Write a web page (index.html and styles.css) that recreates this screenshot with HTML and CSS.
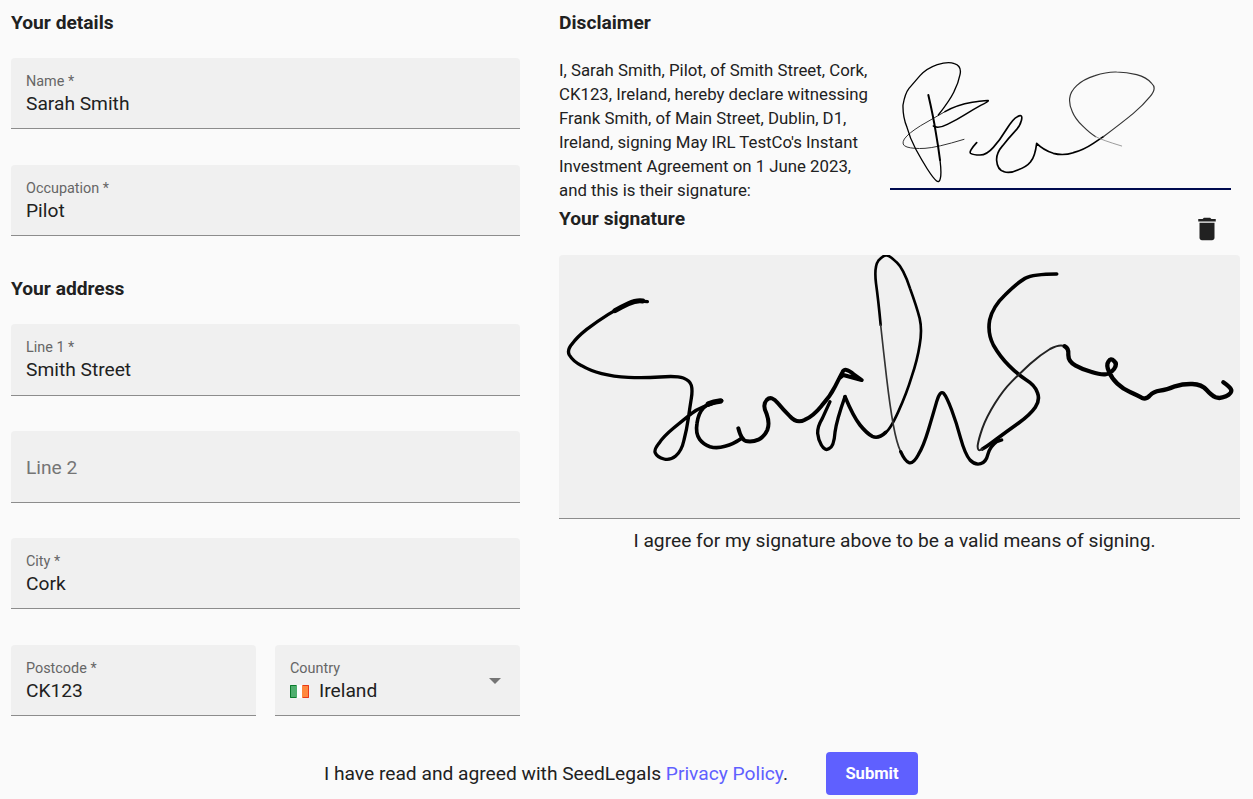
FILE: index.html
```html
<!DOCTYPE html>
<html lang="en">
<head>
    <meta charset="UTF-8">
    <meta name="viewport" content="width=device-width, initial-scale=1.0">
    <title>Witness signature</title>
    <link rel="stylesheet" href="styles.css">
</head>
<body>

<div class="columns">
    <!-- Left: witness details -->
    <section class="details">
        <h2 class="heading">Your details</h2>
        <div class="field"><span class="field-label">Name *</span><span class="field-value">Sarah Smith</span></div>
        <div class="field"><span class="field-label">Occupation *</span><span class="field-value">Pilot</span></div>

        <h2 class="heading heading-spaced">Your address</h2>
        <div class="field field-tall"><span class="field-label">Line 1 *</span><span class="field-value">Smith Street</span></div>
        <div class="field field-tall field-empty"><span class="field-placeholder">Line 2</span></div>
        <div class="field"><span class="field-label">City *</span><span class="field-value">Cork</span></div>
        <div class="field-row">
            <div class="field"><span class="field-label">Postcode *</span><span class="field-value">CK123</span></div>
            <div class="field field-select">
                <span class="field-label">Country</span>
                <span class="field-value">
                    <svg class="flag" viewBox="0 0 19 13" aria-hidden="true">
                        <rect width="19" height="13" fill="#fff"/>
                        <rect width="7" height="13" fill="#4fae6e"/>
                        <rect x="12" width="7" height="13" fill="#ff883e"/>
                        <path d="M6 0.500H0.500V12.500H6" fill="none" stroke="#0b7a2c"/>
                        <path d="M13 0.500H18.500V12.500H13" fill="none" stroke="#e8381c"/>
                    </svg>
                    Ireland
                </span>
                <span class="caret"></span>
            </div>
        </div>
    </section>

    <!-- Right: disclaimer and signature -->
    <section class="disclaimer">
        <h2 class="heading">Disclaimer</h2>
        <div class="statement">
            <p class="statement-text">I, Sarah Smith, Pilot, of Smith Street, Cork, CK123, Ireland, hereby declare witnessing Frank Smith, of Main Street, Dublin, D1, Ireland, signing May IRL TestCo's Instant Investment Agreement on 1 June 2023, and this is their signature:</p>
            <div class="signer-sign">
                <svg class="signer-svg" viewBox="30 24 1023 390" aria-hidden="true" fill="none" stroke="#000" stroke-linecap="round" stroke-linejoin="round">
                    <path stroke-width="3" stroke="#333" d="M252 268 Q170 293 135 295 Q100 297 81 291 Q62 285 73 267 Q85 250 122 227 Q160 205 195 185"/>
                    <path stroke-width="4.500" d="M195 185 Q230 165 277 157 Q325 150 325 152 Q325 155 302 166 Q280 178 255 194 Q230 210 202 223 Q175 237 160 228"/>
                    <path stroke-width="6" d="M145 135 Q160 200 167 245 Q175 290 180 330"/>
                    <path stroke-width="4" d="M180 330 Q185 370 181 385 Q178 400 169 392 Q160 385 142 357 Q125 330 107 297 Q90 265 81 232 Q68 200 69 165 Q75 130 87 115 Q100 100 120 77 Q140 55 172 44 Q205 34 223 41 Q246 48 240 74 Q235 100 222 125 Q210 150 175 195"/>
                    <path stroke-width="5" d="M290 278 Q265 305 272 310 Q280 315 300 315 Q320 315 340 292 Q360 270 380 237 Q400 205 412 200 Q430 190 424 212 Q420 230 402 247 Q385 265 368 287 Q348 310 350 332 Q352 360 372 365 Q390 371 415 359 Q440 350 452 335 Q465 320 470 280 Q490 300 520 310 Q550 318 580 308 Q610 300 640 280 L670 260"/>
                    <path stroke-width="3.500" stroke="#333" d="M670 260 Q730 215 760 190 Q790 165 810 140 Q832 115 815 100 Q800 82 770 74 Q740 66 710 66 Q680 65 645 77 Q610 88 590 107 Q571 125 569 145 Q567 165 577 185 Q585 205 607 227 Q630 250 647 260"/>
                    <path stroke-width="2.500" stroke="#888" d="M647 260 Q665 270 725 288"/>
                </svg>
            </div>
        </div>
        <div class="sign-header">
            <h2 class="heading heading-plain">Your signature</h2>
            <svg class="trash" viewBox="0 0 24 24" aria-hidden="true"><path d="M6 19c0 1.100.9 2 2 2h8c1.100 0 2-.9 2-2V7H6v12zM19 4h-3.500l-1-1h-5l-1 1H5v2h14V4z"/></svg>
        </div>
        <div class="sign-box">
            <svg class="sign-svg" viewBox="27 15 2043 789" aria-hidden="true" fill="none" stroke="#000" stroke-linecap="round" stroke-linejoin="round">
                <path stroke-width="10" d="M292 155 Q260 150 235 161 Q210 172 175 193 Q140 215 110 238 Q80 262 67 281 Q50 300 58 315 Q70 335 95 347 Q120 362 155 371 Q190 380 235 382 Q280 384 330 381 Q380 377 400 384 Q420 392 424 406 Q428 420 424 445 Q420 470 415 505 Q410 540 402 570 Q395 603 377 618 Q360 632 342 627 Q322 622 316 609 Q311 600 327 580 Q340 560 370 535 Q400 510 425 490 Q450 470 515 452"/>
                <path stroke-width="15" d="M278 153 Q260 150 235 161 Q215 170 195 182"/>
                <path stroke-width="16" d="M511 453 Q490 455 475 462"/>
                <path stroke-width="11" d="M515 452 Q475 458 460 474 Q445 490 441 520 Q436 550 449 568 Q460 583 480 590 Q500 596 525 589 Q550 583 575 565"/>
                <path stroke-width="12" d="M565 535 Q575 574 592 574 Q610 576 625 569 Q643 560 652 540 Q660 520 650 492 Q636 465 650 450 Q665 435 684 460 Q700 480 720 499 Q740 522 765 509 Q790 498 815 467 Q840 440 855 410 Q870 380 877 367 Q885 350 910 372 L935 390 L880 375 L868 385"/>
                <path stroke-width="10" d="M885 440 Q860 510 855 547 Q852 590 837 596 Q825 604 814 585 Q805 570 803 550 Q802 530 817 505 L840 455"/>
                <path stroke-width="11" d="M885 440 Q910 500 930 525 Q950 550 967 559 Q985 568 1007 547"/>
                <path stroke-width="8" d="M1007 547 Q1020 540 1045 485 Q1070 430 1085 380 Q1102 330 1109 285 Q1117 240 1109 205 Q1100 170 1080 115 Q1060 55 1040 37 Q1020 17 1010 16 Q1000 15 985 32 Q972 50 978 100 Q985 150 992 225"/>
                <path stroke-width="5" stroke="#333" d="M992 225 Q1000 300 1010 385 Q1020 470 1030 525 Q1040 580 1052 605"/>
                <path stroke-width="10" d="M1052 605 Q1065 634 1077 638 Q1090 642 1105 614 Q1120 590 1135 540 Q1150 490 1160 455 Q1170 420 1181 430 Q1190 440 1205 480 Q1220 520 1232 565 Q1245 612 1260 630 Q1275 646 1292 641 Q1308 637 1314 612 Q1320 590 1340 575 L1355 570"/>
                <path stroke-width="11" d="M1520 72 Q1450 72 1425 85 Q1400 100 1365 135 Q1328 170 1319 210 Q1312 250 1330 285 Q1350 320 1377 347 Q1405 375 1429 390 Q1454 405 1462 427 Q1471 450 1456 472 Q1440 495 1405 520 Q1370 545 1340 567 Q1310 590 1297 597"/>
                <path stroke-width="6" stroke="#222" d="M1297 597 Q1282 608 1283 587 Q1285 570 1297 535 Q1310 500 1335 460 Q1360 420 1385 395 Q1410 370 1440 342 Q1470 315 1500 297 Q1530 281 1544 289"/>
                <path stroke-width="13" d="M1544 289 Q1557 295 1555 315 Q1555 335 1577 347 Q1600 360 1625 366 Q1650 374 1665 373 Q1680 372 1692 357 Q1703 342 1692 333 Q1682 322 1675 335 Q1668 345 1677 365 Q1685 385 1702 401 Q1720 418 1740 426 Q1760 435 1775 443 Q1790 450 1800 436 Q1810 425 1830 422 Q1850 420 1875 409 Q1900 401 1927 402 Q1955 403 1970 420 Q1985 437 1997 442 Q2010 447 2028 439 Q2045 431 2044 421 Q2042 412 2020 397"/>
            </svg>
        </div>
        <p class="sign-caption">I agree for my signature above to be a valid means of signing.</p>
    </section>
</div>

<div class="submit-row">
    <span class="submit-text">I have read and agreed with SeedLegals <a class="submit-link" href="#">Privacy Policy</a>.</span>
    <button class="submit-btn" type="button">Submit</button>
</div>

</body>
</html>
```

FILE: styles.css
```css
* {
    margin: 0;
    padding: 0;
    box-sizing: border-box;
}

body {
    font-family: Roboto, "Liberation Sans", sans-serif;
    background: #fafafa;
    color: #212121;
    height: 799px;
    overflow: hidden;
}

.columns {
    display: flex;
    gap: 39px;
    padding: 0 13px 0 11px;
}

.details {
    width: 509px;
    flex-shrink: 0;
}

.disclaimer {
    width: 681px;
}

.heading {
    font-size: 19.2px;
    font-weight: 700;
    line-height: 24px;
    padding-top: 11px;
    margin-bottom: 23px;
}

.heading-spaced {
    padding-top: 5px;
}

.heading-plain {
    padding-top: 0;
    margin-bottom: 0;
}

/* Form fields */
.field {
    position: relative;
    display: flex;
    flex-direction: column;
    height: 71px;
    margin-bottom: 36px;
    padding: 15px 15px 0;
    background: #f0f0f0;
    border-bottom: 1px solid #8c8c8c;
    border-radius: 4px 4px 0 0;
}

.field-tall {
    height: 72px;
    margin-bottom: 35px;
}

.field-label {
    font-size: 14.4px;
    line-height: 18px;
    color: #666;
}

.field-value {
    display: flex;
    align-items: center;
    font-size: 19.2px;
    line-height: 26px;
    color: #212121;
}

.field-empty {
    justify-content: center;
    padding-top: 2px;
}

.field-placeholder {
    font-size: 19.2px;
    color: #757575;
}

.field-row {
    display: grid;
    grid-template-columns: 245px 245px;
    gap: 19px;
}

.field-row .field {
    margin-bottom: 0;
}

.flag {
    width: 19px;
    height: 13px;
    margin-right: 10px;
}

.caret {
    position: absolute;
    top: 33px;
    right: 19px;
    border-left: 6px solid transparent;
    border-right: 6px solid transparent;
    border-top: 6px solid #757575;
}

/* Disclaimer */
.statement {
    display: flex;
    gap: 16px;
    height: 149px;
}

.statement-text {
    width: 315px;
    font-size: 16.8px;
    line-height: 24px;
}

.signer-sign {
    width: 341px;
    height: 132px;
    border-bottom: 2px solid #000a4f;
}

.signer-svg {
    display: block;
    width: 341px;
    height: 130px;
    filter: blur(0.3px);
}

.sign-header {
    display: flex;
    justify-content: space-between;
    height: 48px;
    padding-right: 18px;
}

.trash {
    width: 30px;
    height: 30px;
    margin-top: 7px;
    fill: #212121;
}

.sign-box {
    height: 264px;
    background: #f0f0f0;
    border-bottom: 1px solid #8c8c8c;
    border-radius: 4px 4px 0 0;
}

.sign-svg {
    display: block;
    width: 681px;
    height: 263px;
    filter: blur(0.3px);
}

.sign-caption {
    margin-top: 10px;
    padding-right: 10px;
    font-size: 19.2px;
    line-height: 24px;
    text-align: center;
}

/* Submit */
.submit-row {
    display: flex;
    justify-content: center;
    align-items: center;
    gap: 38px;
    margin-top: 36px;
    padding-right: 11px;
}

.submit-text {
    font-size: 19.2px;
}

.submit-link {
    color: #5f60ff;
    text-decoration: none;
}

.submit-btn {
    width: 92px;
    height: 43px;
    background: #5f60ff;
    color: white;
    border: none;
    border-radius: 4px;
    font-family: inherit;
    font-size: 16.6px;
    font-weight: 700;
    cursor: pointer;
}
```
